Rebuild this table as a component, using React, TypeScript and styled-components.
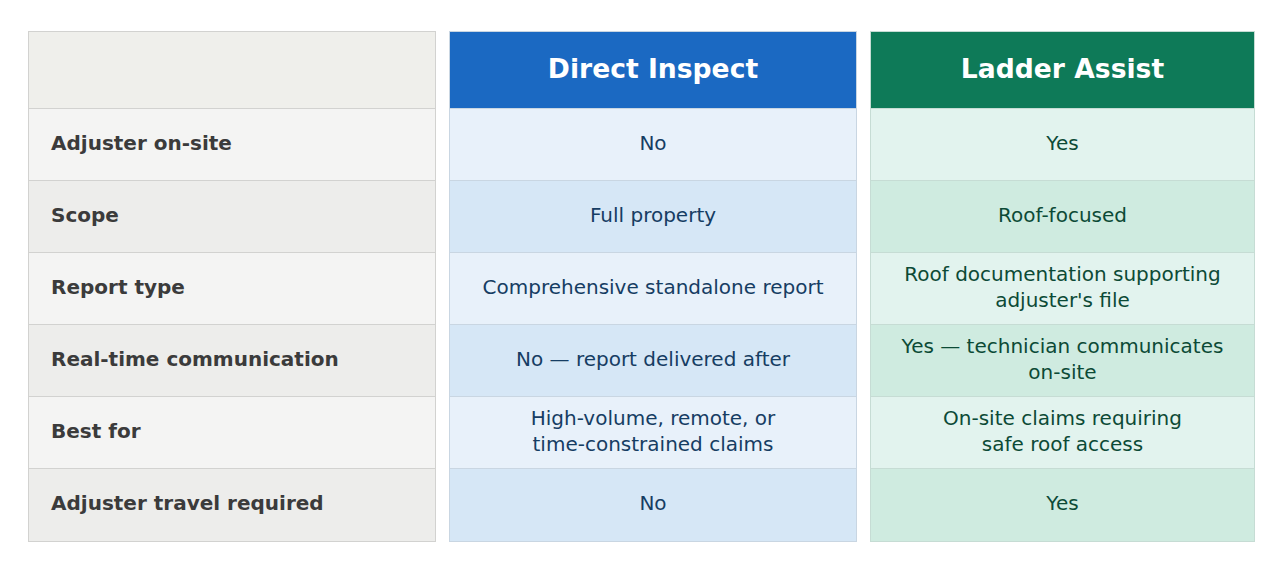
import React from "react";
import styled, { createGlobalStyle } from "styled-components";

const Global = createGlobalStyle`
  html, body { margin: 0; padding: 0; background: #ffffff; }
  body { font-family: "DejaVu Sans", "Liberation Sans", sans-serif; }
`;

type Tone = "neutral" | "blue" | "green";

const palette: Record<Tone, { head: string; headText: string; odd: string; even: string; text: string; border: string }> = {
  neutral: { head: "#efefeb", headText: "#333", odd: "#f4f4f3", even: "#ededeb", text: "#3b3b3b", border: "#d2d2d0" },
  blue: { head: "#1b69c2", headText: "#ffffff", odd: "#e8f1fa", even: "#d6e7f6", text: "#163d63", border: "#c9d6e2" },
  green: { head: "#0e7a58", headText: "#ffffff", odd: "#e2f3ee", even: "#cfebe0", text: "#0c4a36", border: "#c6dcd4" },
};

const Page = styled.div`
  padding: 31px 0 0 28px;
`;

const Grid = styled.div`
  display: grid;
  grid-template-columns: 408px 408px 385px;
  column-gap: 13px;
`;

const Column = styled.div<{ $tone: Tone }>`
  display: flex;
  flex-direction: column;
  border: 1px solid ${(p) => palette[p.$tone].border};
  box-sizing: border-box;
`;

const Head = styled.div<{ $tone: Tone }>`
  height: 77px;
  box-sizing: border-box;
  padding-bottom: 4px;
  background: ${(p) => palette[p.$tone].head};
  color: ${(p) => palette[p.$tone].headText};
  display: flex;
  align-items: center;
  justify-content: center;
  font-size: 26.6px;
  font-weight: 700;
  border-bottom: 1px solid ${(p) => palette[p.$tone].border};
`;

const Cell = styled.div<{ $tone: Tone; $even: boolean; $label?: boolean; $last?: boolean }>`
  height: 72px;
  box-sizing: border-box;
  background: ${(p) => (p.$even ? palette[p.$tone].even : palette[p.$tone].odd)};
  color: ${(p) => palette[p.$tone].text};
  border-bottom: ${(p) => (p.$last ? "none" : `1px solid ${palette[p.$tone].border}`)};
  display: flex;
  align-items: center;
  justify-content: ${(p) => (p.$label ? "flex-start" : "center")};
  text-align: ${(p) => (p.$label ? "left" : "center")};
  padding: ${(p) => (p.$label ? "0 0 4px 22px" : "0 12px 4px")};
  font-size: 20px;
  font-weight: ${(p) => (p.$label ? 700 : 400)};
  line-height: 26px;
`;

const Cells = styled.div`
  display: flex;
  flex-direction: column;
`;

const labels = [
  "Adjuster on-site",
  "Scope",
  "Report type",
  "Real-time communication",
  "Best for",
  "Adjuster travel required",
];

const direct = [
  "No",
  "Full property",
  "Comprehensive standalone report",
  "No — report delivered after",
  "High-volume, remote, or\ntime-constrained claims",
  "No",
];

const ladder = [
  "Yes",
  "Roof-focused",
  "Roof documentation supporting\nadjuster's file",
  "Yes — technician communicates\non-site",
  "On-site claims requiring\nsafe roof access",
  "Yes",
];

const renderText = (t: string) =>
  t.split("\n").map((line, i, arr) => (
    <React.Fragment key={i}>
      {line}
      {i < arr.length - 1 && <br />}
    </React.Fragment>
  ));

const ColumnView: React.FC<{ tone: Tone; title: string; items: string[]; label?: boolean }> = ({ tone, title, items, label }) => (
  <Column $tone={tone}>
    <Head $tone={tone}>{title}</Head>
    <Cells>
      {items.map((it, i) => (
        <Cell key={i} $tone={tone} $even={i % 2 === 1} $label={label} $last={i === items.length - 1}>
          <span>{renderText(it)}</span>
        </Cell>
      ))}
    </Cells>
  </Column>
);

export default function App() {
  return (
    <>
      <Global />
      <Page>
        <Grid>
          <ColumnView tone="neutral" title="" items={labels} label />
          <ColumnView tone="blue" title="Direct Inspect" items={direct} />
          <ColumnView tone="green" title="Ladder Assist" items={ladder} />
        </Grid>
      </Page>
    </>
  );
}
